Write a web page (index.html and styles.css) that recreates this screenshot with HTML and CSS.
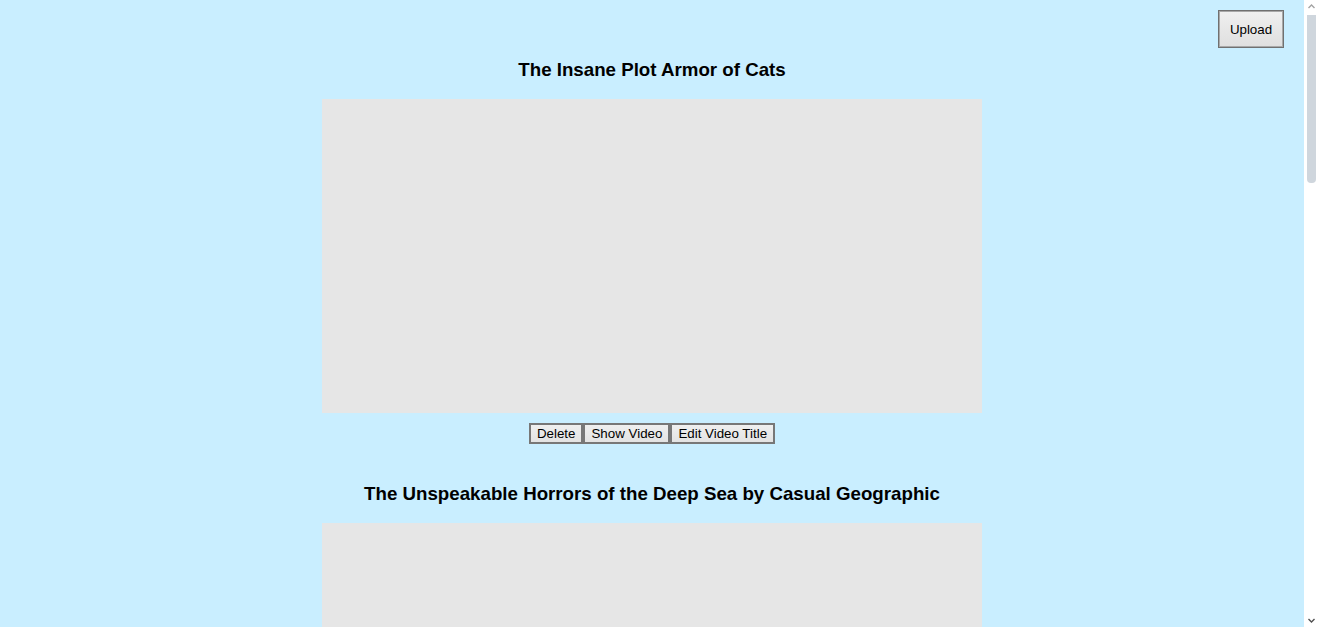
FILE: index.html
```html
<!DOCTYPE html>
<html>
<head>
<meta charset="utf-8">
<link rel="stylesheet" href="styles.css">
</head>
<body>
<div class="viewport">
  <header class="topbar">
    <button class="upload">Upload</button>
  </header>
  <main class="list">
    <section class="video">
      <h3 class="title">The Insane Plot Armor of Cats</h3>
      <div class="player"></div>
      <div class="actions">
        <button class="btn">Delete</button><button class="btn">Show Video</button><button class="btn">Edit Video Title</button>
      </div>
    </section>
    <section class="video">
      <h3 class="title">The Unspeakable Horrors of the Deep Sea by Casual Geographic</h3>
      <div class="player"></div>
    </section>
  </main>
</div>
<div class="scrollbar">
  <svg class="arrow" width="15" height="14" viewBox="0 0 15 14"><path d="M4.5 8 L7.5 5 L10.5 8" fill="none" stroke="#a3a3a3" stroke-width="1.4"/></svg>
  <div class="track"><div class="thumb"></div></div>
  <svg class="arrow" width="15" height="14" viewBox="0 0 15 14"><path d="M4.5 6 L7.5 9 L10.5 6" fill="none" stroke="#505050" stroke-width="1.4"/></svg>
</div>
</body>
</html>
```
FILE: styles.css
```css
html, body {
  margin: 0;
  padding: 0;
  height: 100%;
  overflow: hidden;
}
body {
  display: flex;
  background: #c9eeff;
  font-family: "Liberation Sans", Arial, sans-serif;
  color: #000;
}
.viewport {
  flex: 1;
  height: 100vh;
  overflow: hidden;
  display: flex;
  flex-direction: column;
}
.scrollbar {
  width: 15px;
  flex: none;
  height: 100vh;
  background: #ffffff;
  display: flex;
  flex-direction: column;
}
.arrow {
  display: block;
  flex: none;
}
.track {
  flex: 1;
  display: flex;
  flex-direction: column;
  padding: 1px 3px 0 3px;
}
.thumb {
  width: 9px;
  height: 168px;
  background: #cfd6dd;
  border-radius: 0 0 4px 4px;
}
.topbar {
  display: flex;
  justify-content: flex-end;
  padding: 10px 20px 0 0;
  height: 38px;
  flex: none;
}
.upload {
  width: 66px;
  height: 38px;
  font-family: "Liberation Sans", Arial, sans-serif;
  font-size: 13.333px;
  color: #000;
  background: linear-gradient(#f0f0f0, #dfdfdf);
  border: 1px solid #707070;
  box-shadow: inset 0 0 0 1px #a8a8a8;
  border-radius: 0;
  padding: 0;
}
.list {
  display: flex;
  flex-direction: column;
  align-items: center;
  padding-top: 11px;
  gap: 39px;
}
.video {
  display: flex;
  flex-direction: column;
  align-items: center;
}
.title {
  margin: 0;
  font-size: 18.72px;
  font-weight: bold;
  line-height: 22px;
}
.player {
  margin-top: 18px;
  width: 660px;
  height: 314px;
  background: #e6e6e6;
}
.actions {
  margin-top: 10px;
  display: flex;
}
.btn {
  font-family: "Liberation Sans", Arial, sans-serif;
  font-size: 13.333px;
  color: #000;
  background: linear-gradient(#efefef, #e3e3e3);
  border: 2px solid #777777;
  border-radius: 0;
  padding: 1px 6px;
  height: 21px;
  line-height: 15px;
}
```
